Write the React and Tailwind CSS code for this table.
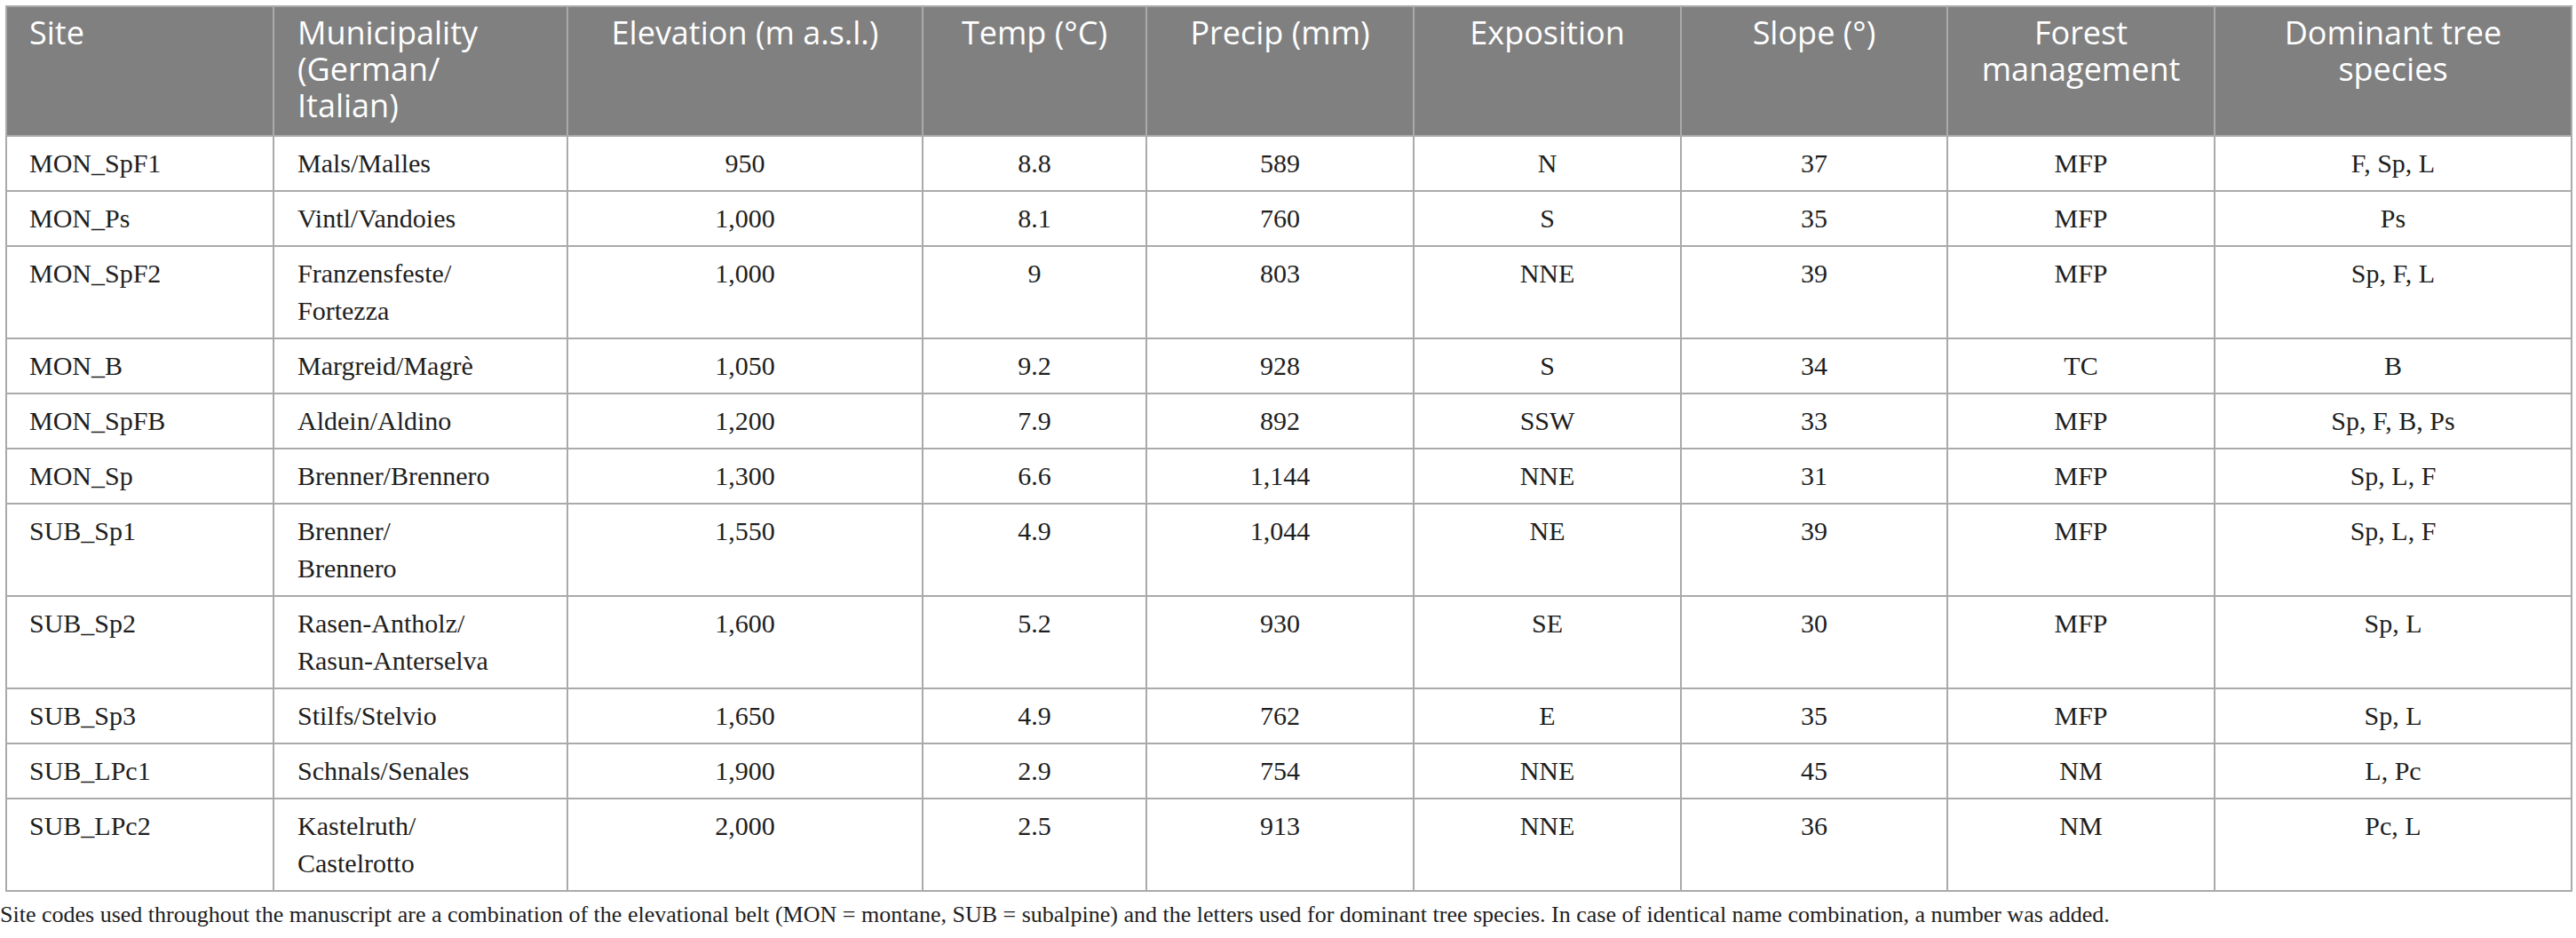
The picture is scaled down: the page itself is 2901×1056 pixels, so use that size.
import React from 'react';

// Site table data
const rows = [
  { site: 'MON_SpF1', muni: ['Mals/Malles'], elev: '950', temp: '8.8', precip: '589', expo: 'N', slope: '37', mgmt: 'MFP', species: 'F, Sp, L' },
  { site: 'MON_Ps', muni: ['Vintl/Vandoies'], elev: '1,000', temp: '8.1', precip: '760', expo: 'S', slope: '35', mgmt: 'MFP', species: 'Ps' },
  { site: 'MON_SpF2', muni: ['Franzensfeste/', 'Fortezza'], elev: '1,000', temp: '9', precip: '803', expo: 'NNE', slope: '39', mgmt: 'MFP', species: 'Sp, F, L' },
  { site: 'MON_B', muni: ['Margreid/Magrè'], elev: '1,050', temp: '9.2', precip: '928', expo: 'S', slope: '34', mgmt: 'TC', species: 'B' },
  { site: 'MON_SpFB', muni: ['Aldein/Aldino'], elev: '1,200', temp: '7.9', precip: '892', expo: 'SSW', slope: '33', mgmt: 'MFP', species: 'Sp, F, B, Ps' },
  { site: 'MON_Sp', muni: ['Brenner/Brennero'], elev: '1,300', temp: '6.6', precip: '1,144', expo: 'NNE', slope: '31', mgmt: 'MFP', species: 'Sp, L, F' },
  { site: 'SUB_Sp1', muni: ['Brenner/', 'Brennero'], elev: '1,550', temp: '4.9', precip: '1,044', expo: 'NE', slope: '39', mgmt: 'MFP', species: 'Sp, L, F' },
  { site: 'SUB_Sp2', muni: ['Rasen-Antholz/', 'Rasun-Anterselva'], elev: '1,600', temp: '5.2', precip: '930', expo: 'SE', slope: '30', mgmt: 'MFP', species: 'Sp, L' },
  { site: 'SUB_Sp3', muni: ['Stilfs/Stelvio'], elev: '1,650', temp: '4.9', precip: '762', expo: 'E', slope: '35', mgmt: 'MFP', species: 'Sp, L' },
  { site: 'SUB_LPc1', muni: ['Schnals/Senales'], elev: '1,900', temp: '2.9', precip: '754', expo: 'NNE', slope: '45', mgmt: 'NM', species: 'L, Pc' },
  { site: 'SUB_LPc2', muni: ['Kastelruth/', 'Castelrotto'], elev: '2,000', temp: '2.5', precip: '913', expo: 'NNE', slope: '36', mgmt: 'NM', species: 'Pc, L' },
];

const th = 'border-2 border-[#aaaaaa] align-top pt-[8px] pb-[13px] font-normal';
const td = 'border-2 border-[#aaaaaa] align-top py-[9px]';

const App = () => {
  return (
    <div className="w-[2901px] h-[1056px] bg-white overflow-hidden">
      <table className="table-fixed border-collapse w-[2889px] ml-[6px] mt-[6px]">
        <colgroup>
          <col className="w-[301px]" />
          <col className="w-[331px]" />
          <col className="w-[400px]" />
          <col className="w-[252px]" />
          <col className="w-[301px]" />
          <col className="w-[301px]" />
          <col className="w-[300px]" />
          <col className="w-[301px]" />
          <col className="w-[402px]" />
        </colgroup>
        <thead className="bg-[#808080] text-white font-['Open_Sans',sans-serif] text-[36px] leading-[41px]">
          <tr>
            <th className={`${th} text-left pl-[25px]`}>Site</th>
            <th className={`${th} text-left pl-[26px]`}>Municipality<br />(German/<br />Italian)</th>
            <th className={`${th} text-center`}>Elevation (m a.s.l.)</th>
            <th className={`${th} text-center`}>Temp (°C)</th>
            <th className={`${th} text-center`}>Precip (mm)</th>
            <th className={`${th} text-center`}>Exposition</th>
            <th className={`${th} text-center`}>Slope (°)</th>
            <th className={`${th} text-center`}>Forest<br />management</th>
            <th className={`${th} text-center`}>Dominant tree<br />species</th>
          </tr>
        </thead>
        <tbody className="text-[#1e1e1e] font-['Liberation_Serif',serif] text-[30px] leading-[42px]">
          {rows.map((r) => (
            <tr key={r.site}>
              <td className={`${td} text-left pl-[25px]`}>{r.site}</td>
              <td className={`${td} text-left pl-[26px]`}>
                {r.muni.map((m, i) => (
                  <div key={i}>{m}</div>
                ))}
              </td>
              <td className={`${td} text-center`}>{r.elev}</td>
              <td className={`${td} text-center`}>{r.temp}</td>
              <td className={`${td} text-center`}>{r.precip}</td>
              <td className={`${td} text-center`}>{r.expo}</td>
              <td className={`${td} text-center`}>{r.slope}</td>
              <td className={`${td} text-center`}>{r.mgmt}</td>
              <td className={`${td} text-center`}>{r.species}</td>
            </tr>
          ))}
        </tbody>
      </table>
      <p className="mt-[8px] font-['Liberation_Serif',serif] text-[26px] leading-[36px] text-[#1e1e1e] whitespace-nowrap">
        Site codes used throughout the manuscript are a combination of the elevational belt (MON = montane, SUB = subalpine) and the letters used for dominant tree species. In case of identical name combination, a number was added.
      </p>
    </div>
  );
};

export default App;
